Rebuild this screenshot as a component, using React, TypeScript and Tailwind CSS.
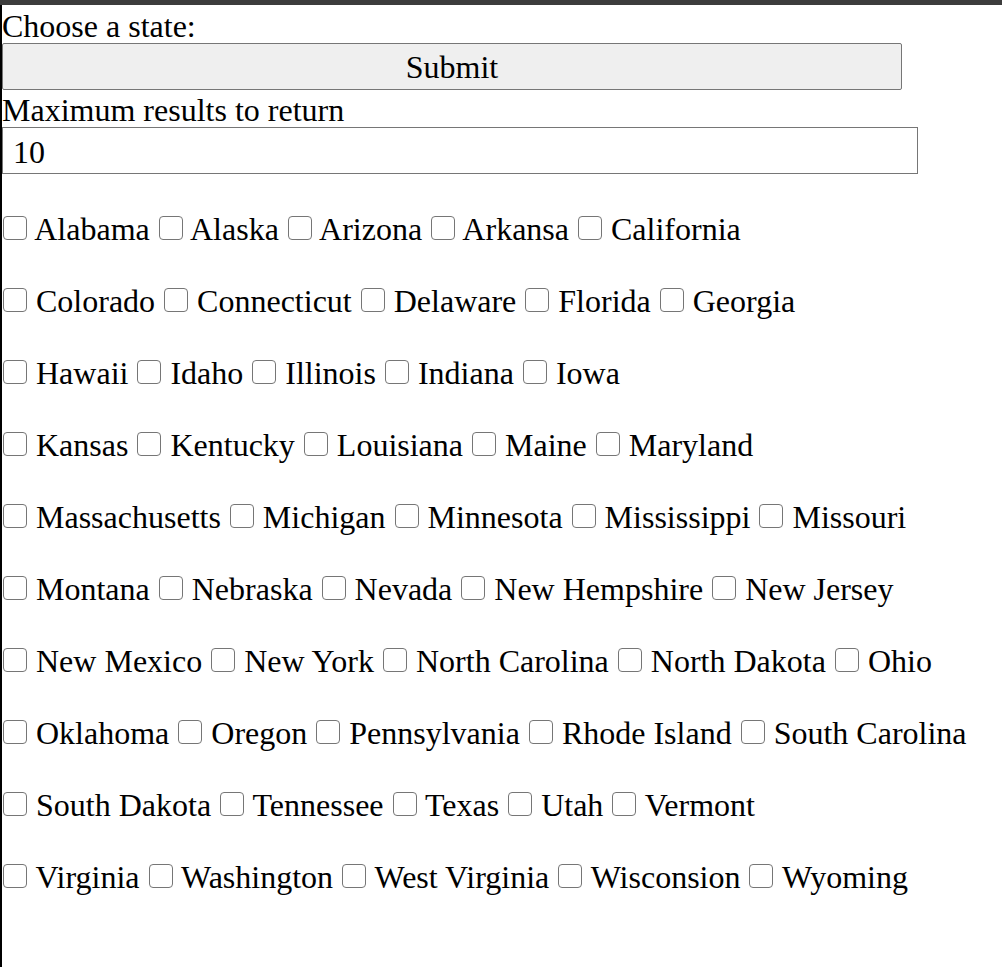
import React from "react";

const STATE_ROWS: string[][] = [
  ["Alabama", "Alaska", "Arizona", "Arkansa", "California"],
  ["Colorado", "Connecticut", "Delaware", "Florida", "Georgia"],
  ["Hawaii", "Idaho", "Illinois", "Indiana", "Iowa"],
  ["Kansas", "Kentucky", "Louisiana", "Maine", "Maryland"],
  ["Massachusetts", "Michigan", "Minnesota", "Mississippi", "Missouri"],
  ["Montana", "Nebraska", "Nevada", "New Hempshire", "New Jersey"],
  ["New Mexico", "New York", "North Carolina", "North Dakota", "Ohio"],
  ["Oklahoma", "Oregon", "Pennsylvania", "Rhode Island", "South Carolina"],
  ["South Dakota", "Tennessee", "Texas", "Utah", "Vermont"],
  ["Virginia", "Washington", "West Virginia", "Wisconsion", "Wyoming"],
];

const StateCheck: React.FC<{ name: string }> = ({ name }) => (
  <>
    <input
      type="checkbox"
      name={name}
      className="appearance-none inline-block align-baseline w-[24px] h-[24px] mx-[1px] border border-[#767676] rounded-[4px] bg-white"
    />{" "}
    {name}{" "}
  </>
);

export default function App() {
  return (
    <div className="min-h-screen flex flex-col bg-white text-black font-['Liberation_Serif','Times_New_Roman',serif] text-[32px]">
      <div className="h-[5px] bg-[#3c3c3c]" />
      <div className="flex-1 border-l-2 border-black">
        <div className="leading-[34px] pt-[4px]">Choose a state:</div>
        <button className="block w-[900px] h-[47px] bg-[#efefef] border border-[#767676] rounded-[2px] text-center leading-[47px]">
          Submit
        </button>
        <div className="leading-[33px] pt-[4px]">Maximum results to return</div>
        <input
          type="text"
          defaultValue="10"
          className="block w-[916px] h-[47px] pl-[10px] pr-[10px] pt-[3px] border border-[#767676] outline-none"
        />
        <div className="mt-[19px]">
          {STATE_ROWS.map((row, i) => (
            <div key={i} className="h-[72px] leading-[72px] whitespace-nowrap">
              {row.map((s) => (
                <StateCheck key={s} name={s} />
              ))}
            </div>
          ))}
        </div>
      </div>
    </div>
  );
}
